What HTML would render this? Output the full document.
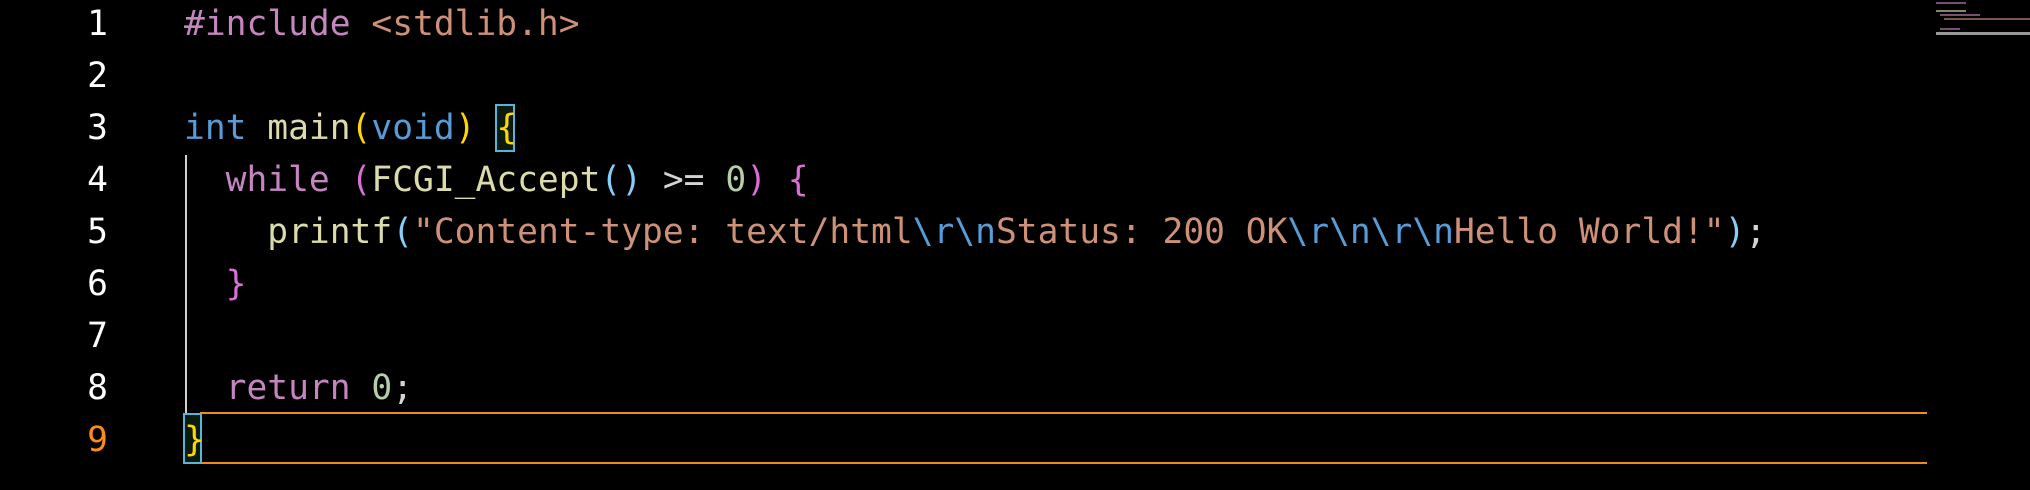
<!DOCTYPE html>
<html><head><style>
html,body{margin:0;padding:0;background:#000;width:2030px;height:490px;overflow:hidden;position:relative}
.ln,.code{position:absolute;top:-2px;font-family:"DejaVu Sans Mono","Liberation Mono",monospace;font-size:34.6px;line-height:52px;white-space:pre}
.ln{left:40px;width:68px;text-align:right;color:#fff}
.code{left:184px;color:#d4d4d4}
.k{color:#c586c0}.s{color:#ce9178}.t{color:#569cd6}.f{color:#dcdcaa}.g{color:#ffd700}.p{color:#da70d6}.b{color:#87cefa}.n{color:#b5cea8}.e{color:#569cd6}
.box{position:absolute;border:2px solid #5ab4d6;box-sizing:border-box}
</style></head><body>
<div class="ln">1
2
3
4
5
6
7
8
<span style="color:#ff8c1a">9</span></div>
<div style="position:absolute;left:185px;top:155px;width:2px;height:258px;background:#d0d0d0"></div>
<div style="position:absolute;left:200px;top:412px;width:1727px;height:2px;background:#f08a1c"></div>
<div style="position:absolute;left:200px;top:462px;width:1727px;height:2px;background:#f08a1c"></div>
<div class="box" style="left:495px;top:104px;width:20px;height:48px;background:#0a1a10"></div>
<div class="box" style="left:183px;top:413px;width:19px;height:51px;background:#0a1a10"></div>
<div class="code"><span class="k">#include</span> <span class="s">&lt;stdlib.h&gt;</span>

<span class="t">int</span> <span class="f">main</span><span class="g">(</span><span class="t">void</span><span class="g">)</span> <span class="g">{</span>
  <span class="k">while</span> <span class="p">(</span><span class="f">FCGI_Accept</span><span class="b">()</span> &gt;= <span class="n">0</span><span class="p">)</span> <span class="p">{</span>
    <span class="f">printf</span><span class="b">(</span><span class="s">"Content-type: text/html</span><span class="e">\r\n</span><span class="s">Status: 200 OK</span><span class="e">\r\n\r\n</span><span class="s">Hello World!"</span><span class="b">)</span>;
  <span class="p">}</span>

  <span class="k">return</span> <span class="n">0</span>;
<span class="g">}</span></div>
<div style="position:absolute;left:1936px;top:2px;width:94px;height:32px;opacity:.6">
<div style="position:absolute;left:0;top:0;width:30px;height:2px;background:#c586c0"></div>
<div style="position:absolute;left:0;top:8px;width:30px;height:2px;background:#dcdcaa"></div>
<div style="position:absolute;left:4px;top:12px;width:40px;height:2px;background:#c586c0"></div>
<div style="position:absolute;left:8px;top:16px;width:86px;height:2px;background:#ce9178"></div>
<div style="position:absolute;left:4px;top:26px;width:20px;height:2px;background:#c586c0"></div>
</div>
<div style="position:absolute;left:1936px;top:32px;width:94px;height:3px;background:#999"></div>
</body></html>
